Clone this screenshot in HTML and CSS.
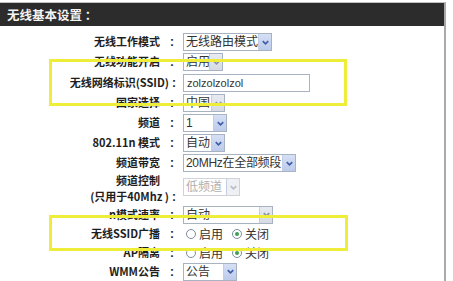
FILE: index.html
```html
<!DOCTYPE html>
<html lang="zh-CN">
<head>
<meta charset="utf-8">
<title>无线基本设置</title>
<link rel="stylesheet" href="styles.css">
</head>
<body>
<div class="panel">
  <div class="head">无线基本设置 ：</div>
  <div class="form">
    <div class="lbl">无线工作模式<i class="c">:</i></div>
    <div class="val"><span class="sel w89"><span class="txt">无线路由模式</span><span class="arr"><svg viewBox="0 0 12 12"><polyline points="3,4.5 6,7.5 9,4.5"/></svg></span></span></div>

    <div class="lbl">无线功能开启<i class="c">:</i></div>
    <div class="val"><span class="sel w40"><span class="txt">启用</span><span class="arr gray"><svg viewBox="0 0 12 12"><polyline points="3,4.5 6,7.5 9,4.5"/></svg></span></span></div>

    <div class="lbl">无线网络标识(SSID)<i class="c tight">:</i></div>
    <div class="val"><span class="inp">zolzolzolzol</span></div>

    <div class="lbl">国家选择<i class="c">:</i></div>
    <div class="val"><span class="sel w42"><span class="txt">中国</span><span class="arr gray"><svg viewBox="0 0 12 12"><polyline points="3,4.5 6,7.5 9,4.5"/></svg></span></span></div>

    <div class="lbl">频道<i class="c">:</i></div>
    <div class="val"><span class="sel w44"><span class="txt">1</span><span class="arr"><svg viewBox="0 0 12 12"><polyline points="3,4.5 6,7.5 9,4.5"/></svg></span></span></div>

    <div class="lbl">802.11n 模式<i class="c">:</i></div>
    <div class="val"><span class="sel w42"><span class="txt">自动</span><span class="arr"><svg viewBox="0 0 12 12"><polyline points="3,4.5 6,7.5 9,4.5"/></svg></span></span></div>

    <div class="lbl">频道带宽<i class="c">:</i></div>
    <div class="val"><span class="sel w113 snug"><span class="txt">20MHz在全部频段</span><span class="arr"><svg viewBox="0 0 12 12"><polyline points="3,4.5 6,7.5 9,4.5"/></svg></span></span></div>

    <div class="lbl two"><span class="line">频道控制<i class="c ghost">:</i></span><span class="line">(只用于40Mhz )<i class="c tight">:</i></span></div>
    <div class="val top"><span class="sel w57 dis"><span class="txt">低频道</span><span class="arr gray"><svg viewBox="0 0 12 12"><polyline points="3,4.5 6,7.5 9,4.5"/></svg></span></span></div>

    <div class="lbl">n模式速率<i class="c">:</i></div>
    <div class="val"><span class="sel w90"><span class="txt">自动</span><span class="arr gray"><svg viewBox="0 0 12 12"><polyline points="3,4.5 6,7.5 9,4.5"/></svg></span></span></div>

    <div class="lbl">无线SSID广播<i class="c">:</i></div>
    <div class="val radios"><span class="opt"><span class="rb"></span>启用</span><span class="opt"><span class="rb on"></span>关闭</span></div>

    <div class="lbl">AP隔离<i class="c">:</i></div>
    <div class="val radios"><span class="opt"><span class="rb"></span>启用</span><span class="opt"><span class="rb on"></span>关闭</span></div>

    <div class="lbl">WMM公告<i class="c">:</i></div>
    <div class="val"><span class="sel w54"><span class="txt">公告</span><span class="arr"><svg viewBox="0 0 12 12"><polyline points="3,4.5 6,7.5 9,4.5"/></svg></span></span></div>
  </div>
  <div class="mark m1"></div>
  <div class="mark m2"></div>
</div>
</body>
</html>
```

FILE: styles.css
```css
html, body {
  margin: 0;
  padding: 0;
  background: #ffffff;
  overflow: hidden;
}
body {
  width: 453px;
  height: 281px;
  font-family: "Noto Sans CJK SC", "Liberation Sans", sans-serif;
}
.panel {
  position: relative;
  width: 444px;
  height: 279px;
  margin-top: 2px;
  border-top: 1px solid #c4c4c4;
  border-right: 2px solid #a9a9a9;
}
.head {
  height: 23px;
  line-height: 23px;
  background: #2c2c2c;
  color: #f4f4f4;
  font-weight: bold;
  font-size: 12.5px;
  padding-left: 7px;
}
.form {
  display: grid;
  grid-template-columns: 180px 1fr;
  grid-template-rows: 20px 20px 21px 20px 20px 20px 20px 32px 19px 19px 19px 19px;
  column-gap: 3px;
  align-items: center;
  padding-top: 6px;
}
.lbl {
  text-align: right;
  font-weight: bold;
  font-size: 11px;
  color: #1e1e1e;
  white-space: nowrap;
  line-height: 15px;
}
.lbl .c {
  display: inline-block;
  font-style: normal;
  font-family: "Liberation Sans", sans-serif;
  font-weight: bold;
  font-size: 12px;
  width: 20px;
  padding-left: 10px;
  box-sizing: border-box;
  text-align: left;
}
.lbl .c.tight {
  width: 11px;
  padding-left: 3px;
}
.lbl.two {
  display: flex;
  flex-direction: column;
  align-items: flex-end;
}
.lbl .c.ghost { visibility: hidden; }
.val {
  display: flex;
  align-items: center;
  height: 18px;
}
.val.top {
  align-self: start;
  margin-top: 5px;
}
.sel {
  box-sizing: border-box;
  height: 18px;
  border: 1px solid #a7b3c3;
  background: #fff;
  display: flex;
  align-items: center;
  font-family: "Liberation Sans", "Noto Sans CJK SC", sans-serif;
  font-size: 12px;
  color: #333;
  line-height: 16px;
}
.sel.snug { letter-spacing: -0.3px; }
.sel .txt {
  flex: 1;
  min-width: 0;
  padding-left: 2px;
  white-space: nowrap;
}
.sel .arr {
  box-sizing: border-box;
  width: 13px;
  height: 16px;
  background: linear-gradient(#d6e0f5, #bccbeb);
  border-left: 1px solid #c3cde3;
  display: flex;
  align-items: center;
  justify-content: center;
  flex: none;
}
.sel .arr svg {
  width: 11px;
  height: 11px;
  fill: none;
  stroke: #3f5da6;
  stroke-width: 1.8;
}
.sel .arr.gray {
  background: linear-gradient(#e8ebf1, #d5dae4);
}
.sel .arr.gray svg { stroke: #8a94a8; }
.sel.dis {
  border-color: #cfd3d8;
  color: #b0b0b0;
}
.sel.dis .arr { background: #eef0f3; }
.sel.dis .arr svg { stroke: #b9bec7; }
.w40 { width: 40px; }
.w42 { width: 42px; }
.w44 { width: 44px; }
.w54 { width: 54px; }
.w57 { width: 57px; }
.w89 { width: 89px; }
.w90 { width: 90px; }
.w113 { width: 113px; }
.inp {
  box-sizing: border-box;
  width: 127px;
  height: 18px;
  border: 1px solid #a7b3c3;
  font-family: "Liberation Sans", sans-serif;
  font-size: 11px;
  color: #333;
  line-height: 16px;
  padding-left: 3px;
}
.radios {
  font-size: 12px;
  color: #333;
  gap: 9px;
}
.opt {
  display: flex;
  align-items: center;
  gap: 3px;
}
.rb {
  box-sizing: border-box;
  width: 10px;
  height: 10px;
  border: 1px solid #7e8c9e;
  border-radius: 50%;
  background: #fff;
  position: relative;
}
.opt:first-child .rb { margin-left: 3px; }
.rb.on::after {
  content: "";
  position: absolute;
  left: 2px;
  top: 2px;
  width: 4px;
  height: 4px;
  border-radius: 50%;
  background: #3f9e54;
}
.mark {
  position: absolute;
  box-sizing: border-box;
  border: 3.5px solid #eeee3a;
}
.m1 {
  left: 49px;
  top: 56px;
  width: 298px;
  height: 47px;
}
.m2 {
  left: 49px;
  top: 212px;
  width: 299px;
  height: 36px;
}
```
